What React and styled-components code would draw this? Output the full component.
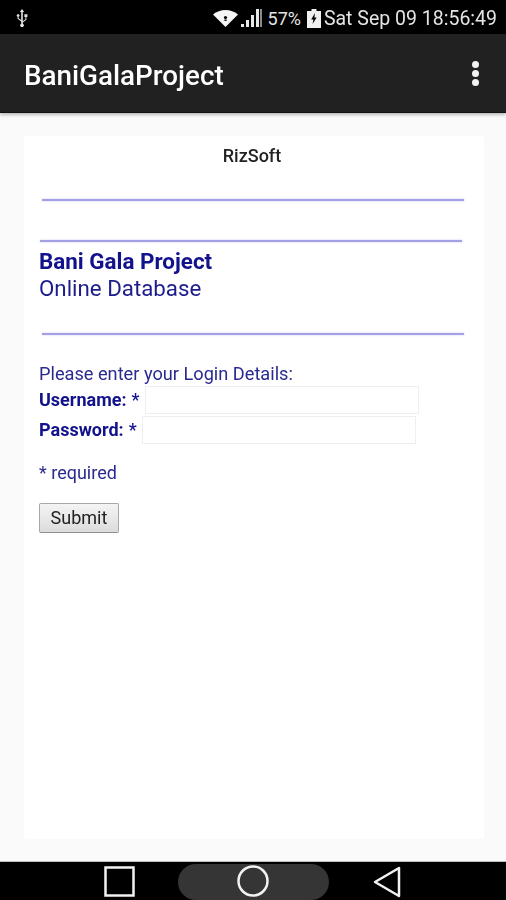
import React from 'react'
import styled, { createGlobalStyle } from 'styled-components'

const GlobalStyle = createGlobalStyle`
  html, body {
    margin: 0;
    padding: 0;
    background: #000;
    font-family: Roboto, "Liberation Sans", sans-serif;
  }
`
const Screen = styled.div`
  width: 506px;
  height: 900px;
  display: flex;
  flex-direction: column;
  overflow: hidden;
  filter: blur(0.4px);
`
const StatusBar = styled.div`
  height: 34px;
  flex: none;
  background: #000;
  color: #e4e4e4;
  display: flex;
  align-items: center;
  padding: 2px 9px 0 15px;
  box-sizing: border-box;
`
const StatusRight = styled.div`
  margin-left: auto;
  display: flex;
  align-items: center;
`
const StatusText = styled.span`
  margin-left: ${props => props.$ml || 0}px;
  font-size: ${props => props.$size}px;
  white-space: nowrap;
`
const StatusIcon = styled.span`
  display: flex;
  margin-left: ${props => props.$ml || 0}px;
`
const AppBar = styled.header`
  height: 78px;
  flex: none;
  background: #212121;
  display: flex;
  align-items: center;
  justify-content: space-between;
  padding: 0 24px;
  border-bottom: 1px solid #111;
  box-shadow: 0 2px 3px rgba(0, 0, 0, 0.25);
  position: relative;
`
const AppTitle = styled.h1`
  margin: 5px 0 0;
  color: #fff;
  font-size: 27.8px;
  font-weight: 500;
`
const MenuDots = styled.div`
  display: flex;
  flex-direction: column;
  gap: 2px;
  margin-right: 3px;
`
const Dot = styled.span`
  width: 7px;
  height: 7px;
  border-radius: 50%;
  background: #f2f2f2;
`
const Content = styled.main`
  flex: 1;
  min-height: 0;
  background: #fafafa;
  padding: 23px 22px 22px 24px;
  display: flex;
`
const Card = styled.div`
  flex: 1;
  background: #fff;
  border-radius: 3px;
  padding: 10px 14px 0 15px;
  color: #14148c;
`
const Company = styled.div`
  text-align: center;
  color: #222;
  font-size: 18px;
  font-weight: 500;
  line-height: 20px;
  padding-right: 5px;
`
const Rule = styled.div`
  height: 2px;
  width: 422px;
  background: #a3a0e4;
  box-shadow: 0 0 2px rgba(163, 160, 228, 0.6);
  margin: ${props => props.$top}px 0 0 ${props => props.$left}px;
`
const ProjectName = styled.h2`
  margin: 6px 0 0;
  font-size: 22.4px;
  line-height: 26px;
  font-weight: 700;
  color: #12128c;
`
const Subtitle = styled.div`
  margin-top: 1px;
  font-size: 22.3px;
  line-height: 27px;
  color: #1c1c8c;
`
const Prompt = styled.p`
  margin: 28px 0 0;
  font-size: 18.2px;
  line-height: 22px;
  color: #2a2a90;
`
const FieldRow = styled.label`
  display: flex;
  align-items: center;
  height: 29px;
  margin-top: ${props => props.$top || 0}px;
  font-size: 18px;
  font-weight: 700;
  color: #12128c;
`
const Star = styled.span`
  margin-left: 5px;
  font-weight: 500;
`
const TextInput = styled.input`
  width: ${props => props.$width}px;
  height: 28px;
  box-sizing: border-box;
  margin-left: 5px;
  padding: 0;
  border: 1px solid #efefef;
  background: #fff;
  outline: none;
`
const Required = styled.p`
  margin: 18px 0 0;
  font-size: 18px;
  line-height: 22px;
  color: #2a2a90;
`
const SubmitButton = styled.button`
  display: block;
  margin-top: 19px;
  width: 80px;
  height: 30px;
  padding: 0 0 2px;
  box-sizing: border-box;
  border: 1px solid #a8a8a8;
  border-bottom-color: #8f8f8f;
  border-radius: 2px;
  background: linear-gradient(#f4f4f4, #dcdcdc);
  color: #222;
  font-family: Roboto, sans-serif;
  font-size: 18px;
`
const NavBar = styled.nav`
  height: 39px;
  flex: none;
  background: #000;
  border-top: 1px solid #bdbdbd;
  box-sizing: border-box;
  display: grid;
  grid-template-columns: 104px 32px 42px 150px 42px 1fr;
  align-items: start;
`
const HomePill = styled.div`
  grid-column: 3 / 6;
  grid-row: 1;
  justify-self: center;
  width: 151px;
  height: 36px;
  margin-top: 2px;
  border-radius: 18px;
  background: #353535;
  display: flex;
  justify-content: center;
  padding-top: 1px;
  box-sizing: border-box;
`
const NavIcon = styled.svg`
  display: block;
  grid-column: ${props => props.$col};
  grid-row: 1;
  margin: 4px 0 0 ${props => props.$ml || 0}px;
`

function UsbIcon() {
  return (
    <svg width="14" height="18" viewBox="0 0 14 18" fill="#e4e4e4">
      <path d="M7 0 9.2 3H7.8v9.2l2.6-2V8H9.4V5.2h3V8h-1v2.8L7.8 13.6v1.2a1.8 1.8 0 1 1-1.6 0v-2.4L2.6 9.8V7.7a1.3 1.3 0 1 1 1 0v1.6l2.6 1.8V3H4.8z" />
    </svg>
  )
}

function WifiIcon() {
  return (
    <svg width="25" height="17" viewBox="0 0 25 17">
      <path d="M0 4.5C3.5 1.6 7.8 0 12.5 0S21.5 1.6 25 4.5L12.5 17z" fill="#f5f5f5" />
      <circle cx="12.5" cy="7.5" r="1.6" fill="#000" />
      <rect x="11.4" y="9.5" width="2.2" height="1.4" fill="#000" />
    </svg>
  )
}

function SignalIcon() {
  return (
    <svg width="21" height="20" viewBox="0 0 21 20" fill="#e8e8e8">
      <rect x="0" y="16" width="3" height="3" />
      <rect x="5" y="12" width="3" height="7" />
      <rect x="10" y="7" width="3" height="12" />
      <rect x="15" y="1" width="3" height="18" />
      <rect x="19" y="1" width="2" height="18" fill="#8a8a8a" />
    </svg>
  )
}

function BatteryIcon() {
  return (
    <svg width="14" height="19" viewBox="0 0 14 19">
      <path d="M4.5 0h5v2H14v17H0V2h4.5z" fill="#f0f0f0" />
      <path d="M8 4 4.2 10.5h2.2L5.6 15l4-6.5H7.4z" fill="#000" />
    </svg>
  )
}

function App() {
  return (
    <Screen>
      <GlobalStyle />
      <StatusBar>
        <UsbIcon />
        <StatusRight>
          <StatusIcon><WifiIcon /></StatusIcon>
          <StatusIcon $ml={3}><SignalIcon /></StatusIcon>
          <StatusText $ml={6} $size={18}>57%</StatusText>
          <StatusIcon $ml={6}><BatteryIcon /></StatusIcon>
          <StatusText $ml={3} $size={19.5}>Sat Sep 09 18:56:49</StatusText>
        </StatusRight>
      </StatusBar>
      <AppBar>
        <AppTitle>BaniGalaProject</AppTitle>
        <MenuDots>
          <Dot />
          <Dot />
          <Dot />
        </MenuDots>
      </AppBar>
      <Content>
        <Card>
          <Company>RizSoft</Company>
          <Rule $top={33} $left={3} />
          <Rule $top={39} $left={1} />
          <ProjectName>Bani Gala Project</ProjectName>
          <Subtitle>Online Database</Subtitle>
          <Rule $top={31} $left={3} />
          <Prompt>Please enter your Login Details:</Prompt>
          <FieldRow>
            Username:<Star>*</Star>
            <TextInput $width={274} type="text" />
          </FieldRow>
          <FieldRow $top={1}>
            Password:<Star>*</Star>
            <TextInput $width={274} type="password" />
          </FieldRow>
          <Required>* required</Required>
          <SubmitButton type="button">Submit</SubmitButton>
        </Card>
      </Content>
      <NavBar>
        <HomePill>
          <svg width="32" height="32" viewBox="0 0 32 32" fill="none" stroke="#f2f2f2" strokeWidth="2.5">
            <circle cx="16" cy="16" r="14.5" />
          </svg>
        </HomePill>
        <NavIcon $col="2" width="32" height="32" viewBox="0 0 32 32" fill="none" stroke="#f2f2f2" strokeWidth="2.5">
          <rect x="1.5" y="1.5" width="28" height="28" />
        </NavIcon>
        <NavIcon $col="6" $ml={3} width="30" height="32" viewBox="0 0 30 32" fill="none" stroke="#f2f2f2" strokeWidth="2.5" strokeLinejoin="round">
          <path d="M26 2v28L2 16z" />
        </NavIcon>
      </NavBar>
    </Screen>
  )
}

export default App
